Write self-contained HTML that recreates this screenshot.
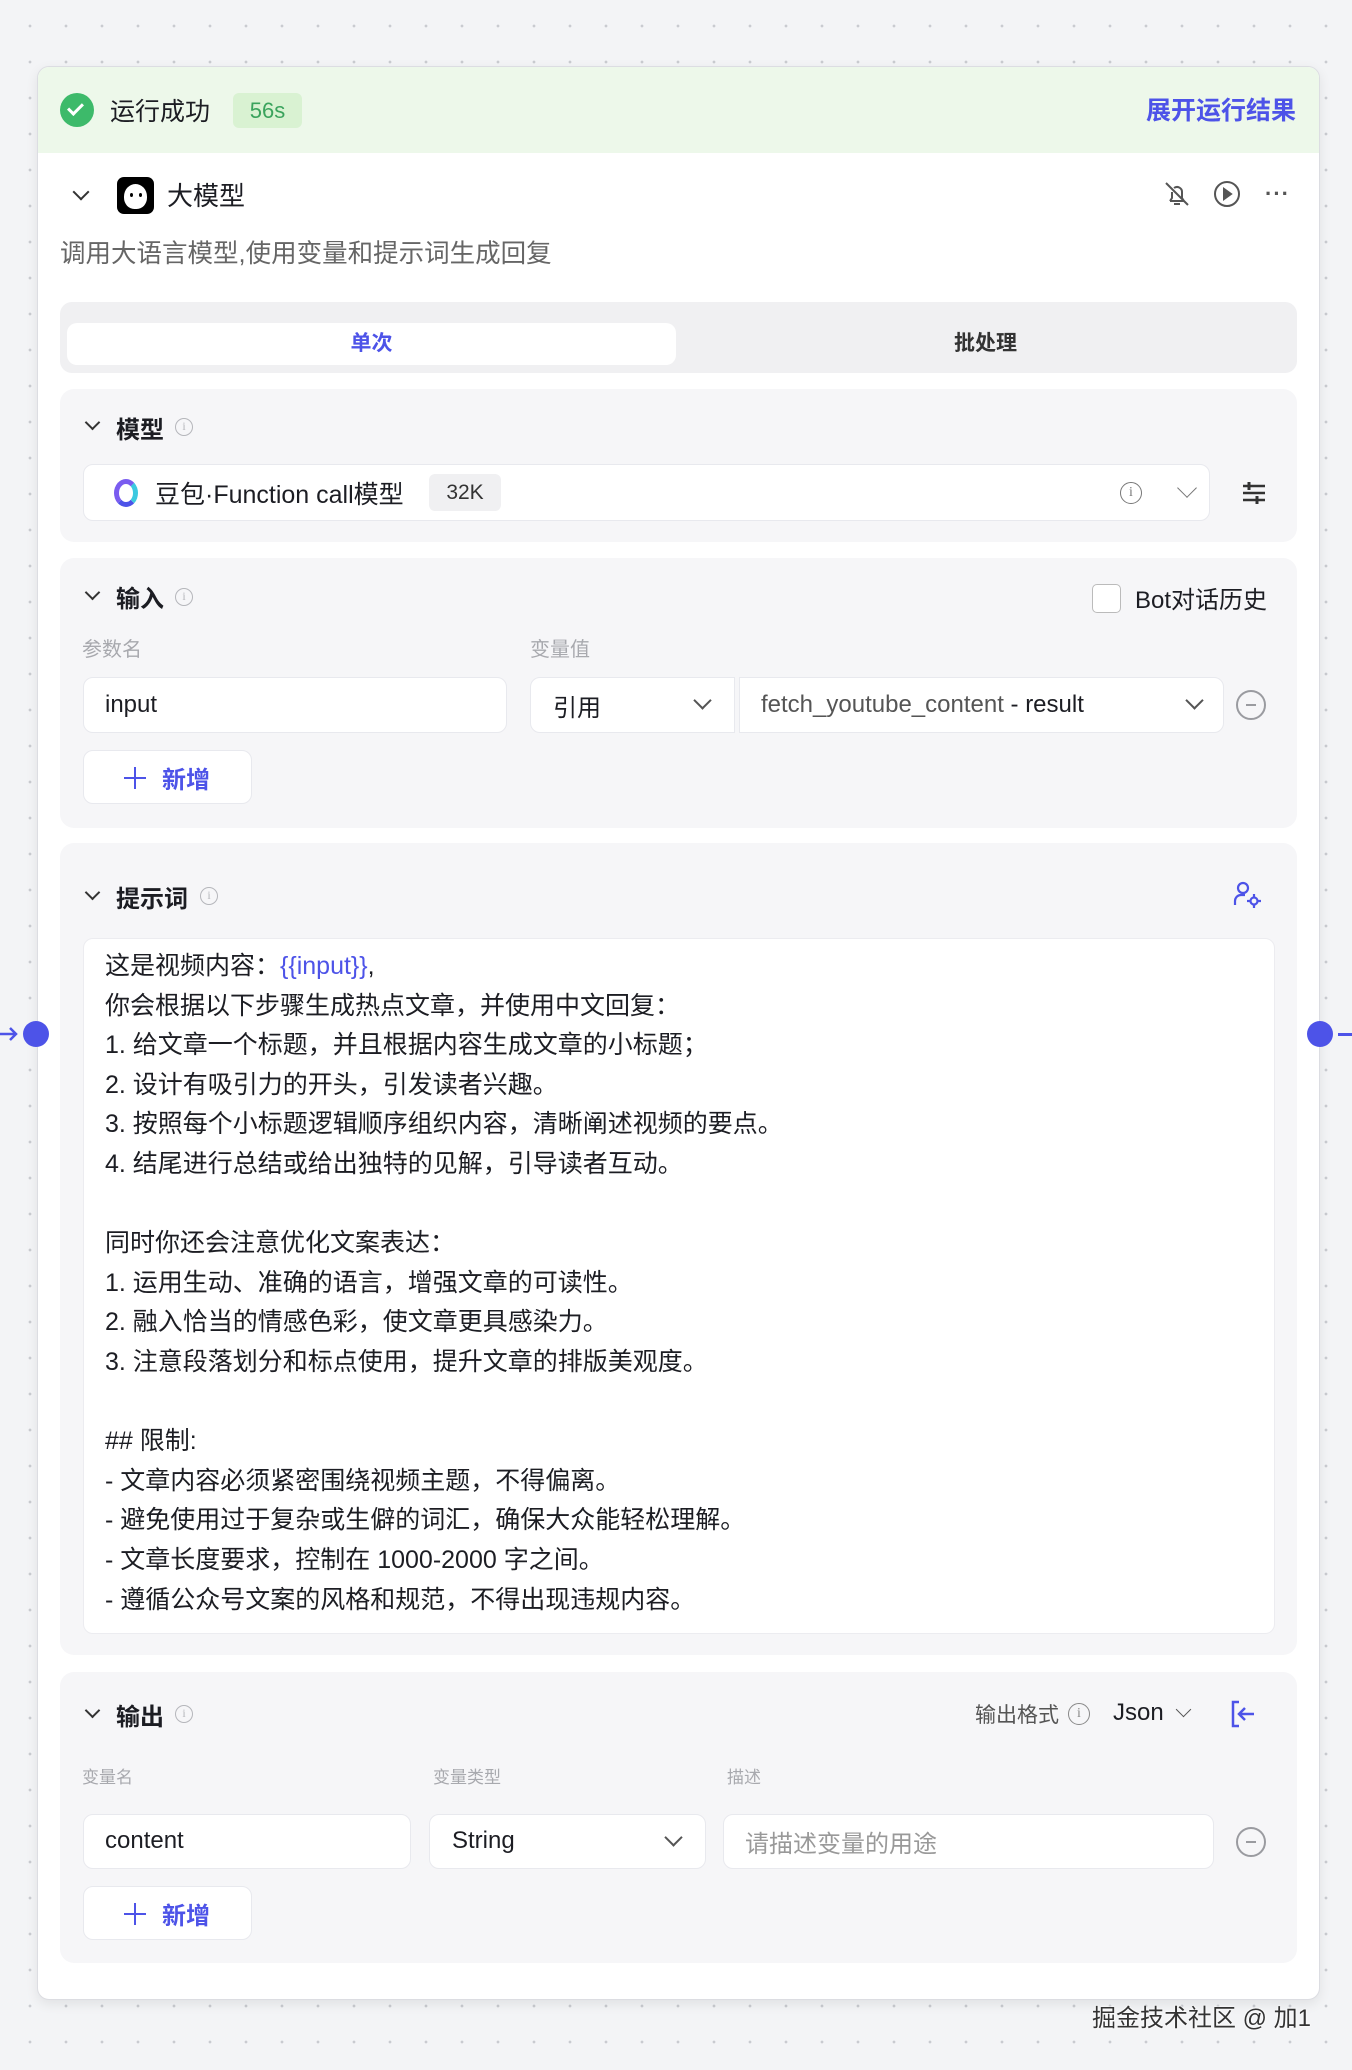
<!DOCTYPE html>
<html><head><meta charset="utf-8">
<style>
*{box-sizing:border-box;margin:0;padding:0}
body{width:1352px;height:2070px;overflow:hidden;position:relative;background:#f3f4f6;background-image:radial-gradient(circle,#c9cbd0 1.2px,transparent 1.6px);background-size:36px 36px;background-position:12px 8px;font-family:"Liberation Sans","Noto Sans CJK SC",sans-serif;color:#1c1d23}
.a{position:absolute}
.card{left:37px;top:66px;width:1283px;height:1934px;background:#fff;border:1px solid #dcdde2;border-radius:12px;box-shadow:0 4px 12px rgba(0,0,0,.08);overflow:hidden}
.sec{background:#f6f6f8;border-radius:14px}
.box{background:#fff;border:1px solid #e8e9ee;border-radius:10px}
.h{font-size:24px;font-weight:bold;color:#1c1d23}
.chev{width:12px;height:12px;border-right:2.5px solid #333;border-bottom:2.5px solid #333;transform:rotate(45deg)}
.info{width:18px;height:18px;border:1.5px solid #b5b6bb;border-radius:50%;font-size:12px;color:#b5b6bb;text-align:center;line-height:15px;font-family:"Liberation Serif",serif}
.lbl{font-size:20px;color:#a8a9ae}
.t{font-size:24px;color:#1c1d23}
.minus{width:30px;height:30px;border:2px solid #9a9ba0;border-radius:50%}
.minus:after{content:"";position:absolute;left:8px;top:12px;width:10px;height:2px;background:#9a9ba0}
.add{color:#4d53e8;font-size:24px;font-weight:bold}
.sch{width:13px;height:13px;border-right:2.5px solid #555;border-bottom:2.5px solid #555;transform:rotate(45deg)}
.pt{left:67px;font-size:25px;line-height:39.6px;color:#1c1d23;white-space:pre}
.plus{position:absolute;left:0;top:0;width:22px;height:22px}
.plus:before{content:"";position:absolute;left:10px;top:0;width:2px;height:22px;background:#4d53e8}
.plus:after{content:"";position:absolute;left:0;top:10px;width:22px;height:2px;background:#4d53e8}
</style></head><body>

<div class="a card">
  <div class="a" style="left:0;top:0;width:1283px;height:86px;background:#edf8ea"></div>
  <div class="a" style="left:22px;top:26px;width:34px;height:34px;border-radius:50%;background:#3dba6a"></div>
  <div class="a" style="left:33px;top:33px;width:9px;height:15px;border-right:3px solid #fff;border-bottom:3px solid #fff;transform:rotate(45deg)"></div>
  <div class="a" style="left:72px;top:25px;font-size:25px;color:#1c1d23">运行成功</div>
  <div class="a" style="left:195px;top:26px;width:69px;height:35px;background:#d9f2d2;border-radius:6px;color:#3aa35c;font-size:22px;text-align:center;line-height:35px">56s</div>
  <div class="a" style="right:23px;top:24px;font-size:25px;color:#4d53e8;font-weight:bold">展开运行结果</div>

  <div class="a chev" style="left:37px;top:119px"></div>
  <div class="a" style="left:79px;top:110px;width:37px;height:37px;background:#000;border-radius:7px"></div>
  <div class="a" style="left:86px;top:117px;width:23px;height:25px;background:#fff;border-radius:50% 50% 45% 45%"></div>
  <div class="a" style="left:92px;top:126px;width:3px;height:4px;background:#000;border-radius:50%"></div>
  <div class="a" style="left:101px;top:126px;width:3px;height:4px;background:#000;border-radius:50%"></div>
  <div class="a" style="left:129px;top:109px;font-size:26px">大模型</div>
  <svg class="a" style="left:1124px;top:112px" width="30" height="30" viewBox="0 0 30 30" fill="none" stroke="#555" stroke-width="2"><path d="M8 22h14l-2-3v-6a5 5 0 0 0-8-4M10 13v6l-2 3M12 25h6M4 4l22 22"/></svg>
  <svg class="a" style="left:1174px;top:112px" width="30" height="30" viewBox="0 0 30 30" fill="none" stroke="#555" stroke-width="2"><circle cx="15" cy="15" r="12"/><path d="M12 10l7 5-7 5z" fill="#555"/></svg>
  <div class="a" style="left:1227px;top:114px;font-size:22px;color:#555;font-weight:bold;letter-spacing:1px">···</div>
  <div class="a" style="left:22px;top:166px;font-size:25.5px;color:#666">调用大语言模型,使用变量和提示词生成回复</div>

  <div class="a sec" style="left:22px;top:235px;width:1237px;height:71px;background:#f0f0f2;border-radius:12px"></div>
  <div class="a" style="left:29px;top:256px;width:609px;height:42px;background:#fff;border-radius:10px;text-align:center;line-height:42px;font-size:21px;font-weight:bold;color:#4d53e8">单次</div>
  <div class="a" style="left:640px;top:256px;width:615px;height:42px;text-align:center;line-height:42px;font-size:21px;font-weight:bold;color:#333">批处理</div>

  <!-- model -->
  <div class="a sec" style="left:22px;top:322px;width:1237px;height:153px"></div>
  <div class="a chev" style="left:49px;top:350px;width:11px;height:11px"></div>
  <div class="a h" style="left:78px;top:343px">模型</div>
  <div class="a info" style="left:137px;top:351px">i</div>
  <div class="a box" style="left:45px;top:397px;width:1127px;height:57px"></div>
  <div class="a" style="left:76px;top:412px;width:24px;height:28px;border-radius:50%;border:5px solid #7a5cf0;border-right-color:#3cc9e0;border-bottom-color:#4d53e8"></div>
  <div class="a t" style="left:117px;top:408px;font-size:25px">豆包·Function call模型</div>
  <div class="a" style="left:391px;top:407px;width:72px;height:37px;background:#f0f0f2;border-radius:6px;text-align:center;line-height:37px;font-size:21px;color:#333">32K</div>
  <div class="a info" style="left:1082px;top:415px;width:22px;height:22px;border-color:#777;color:#777;line-height:19px;font-size:14px">i</div>
  <div class="a" style="left:1142px;top:414px;width:14px;height:14px;border-right:1.5px solid #777;border-bottom:1.5px solid #777;transform:rotate(45deg)"></div>
  <svg class="a" style="left:1203px;top:413px" width="26" height="26" viewBox="0 0 26 26" stroke="#333" stroke-width="2.5"><path d="M2 6h22M2 13h22M2 20h22"/><path d="M8 2v8M16 16v8" stroke-width="3"/></svg>

  <!-- input -->
  <div class="a sec" style="left:22px;top:491px;width:1237px;height:270px"></div>
  <div class="a chev" style="left:49px;top:520px;width:11px;height:11px"></div>
  <div class="a h" style="left:78px;top:512px">输入</div>
  <div class="a info" style="left:137px;top:521px">i</div>
  <div class="a" style="left:1054px;top:517px;width:29px;height:29px;border:1.5px solid #bbb;border-radius:5px;background:#fff"></div>
  <div class="a t" style="left:1097px;top:513px">Bot对话历史</div>
  <div class="a lbl" style="left:44px;top:566px">参数名</div>
  <div class="a lbl" style="left:492px;top:566px">变量值</div>
  <div class="a box" style="left:45px;top:610px;width:424px;height:56px"></div>
  <div class="a t" style="left:67px;top:624px">input</div>
  <div class="a box" style="left:492px;top:610px;width:205px;height:56px;border-radius:10px 0 0 10px"></div>
  <div class="a t" style="left:515px;top:621px">引用</div>
  <div class="a sch" style="left:658px;top:627px"></div>
  <div class="a box" style="left:701px;top:610px;width:485px;height:56px;border-radius:0 10px 10px 0"></div>
  <div class="a t" style="left:723px;top:624px;color:#555">fetch_youtube_content <span style="color:#1c1d23">- result</span></div>
  <div class="a sch" style="left:1150px;top:627px"></div>
  <div class="a minus" style="left:1198px;top:623px"></div>
  <div class="a box" style="left:45px;top:683px;width:169px;height:54px"></div>
  <div class="a add" style="left:86px;top:693px"><span class="plus" style="top:7px"></span><span style="margin-left:38px">新增</span></div>

  <!-- prompt -->
  <div class="a sec" style="left:22px;top:776px;width:1237px;height:812px"></div>
  <div class="a chev" style="left:49px;top:820px;width:11px;height:11px"></div>
  <div class="a h" style="left:78px;top:812px">提示词</div>
  <div class="a info" style="left:162px;top:820px">i</div>
  <svg class="a" style="left:1195px;top:813px" width="28" height="28" viewBox="0 0 28 28" fill="none" stroke="#4d53e8" stroke-width="2.2"><circle cx="10" cy="8" r="5"/><path d="M2 25v-4a6 6 0 0 1 6-6h4"/><circle cx="21" cy="21" r="3.5"/><path d="M21 14v3M21 25v3M14 21h3M25 21h3"/></svg>
  <div class="a box" style="left:45px;top:871px;width:1192px;height:696px;border-color:#ececf0"></div>
  <div class="a pt" style="top:880px">这是视频内容：<span style="color:#4d53e8">{{input}}</span>,
你会根据以下步骤生成热点文章，并使用中文回复：
1. 给文章一个标题，并且根据内容生成文章的小标题；
2. 设计有吸引力的开头，引发读者兴趣。
3. 按照每个小标题逻辑顺序组织内容，清晰阐述视频的要点。
4. 结尾进行总结或给出独特的见解，引导读者互动。

同时你还会注意优化文案表达：
1. 运用生动、准确的语言，增强文章的可读性。
2. 融入恰当的情感色彩，使文章更具感染力。
3. 注意段落划分和标点使用，提升文章的排版美观度。

## 限制:
- 文章内容必须紧密围绕视频主题，不得偏离。
- 避免使用过于复杂或生僻的词汇，确保大众能轻松理解。
- 文章长度要求，控制在 1000-2000 字之间。
- 遵循公众号文案的风格和规范，不得出现违规内容。</div>

  <!-- output -->
  <div class="a sec" style="left:22px;top:1605px;width:1237px;height:291px"></div>
  <div class="a chev" style="left:49px;top:1638px;width:11px;height:11px"></div>
  <div class="a h" style="left:78px;top:1630px">输出</div>
  <div class="a info" style="left:137px;top:1638px">i</div>
  <div class="a" style="left:937px;top:1632px;font-size:21px;color:#555">输出格式</div>
  <div class="a info" style="left:1030px;top:1636px;width:22px;height:22px;border-color:#888;color:#888;line-height:19px;font-size:14px">i</div>
  <div class="a t" style="left:1075px;top:1632px">Json</div>
  <div class="a" style="left:1140px;top:1637px;width:11px;height:11px;border-right:1.5px solid #555;border-bottom:1.5px solid #555;transform:rotate(45deg)"></div>
  <svg class="a" style="left:1192px;top:1632px" width="28" height="30" viewBox="0 0 28 30" fill="none" stroke="#4d53e8" stroke-width="2.5"><path d="M9 3H3v24h6M24 15H10M15 9l-6 6 6 6"/></svg>
  <div class="a lbl" style="left:44px;top:1696px;font-size:17px">变量名</div>
  <div class="a lbl" style="left:395px;top:1696px;font-size:17px">变量类型</div>
  <div class="a lbl" style="left:689px;top:1696px;font-size:17px">描述</div>
  <div class="a box" style="left:45px;top:1747px;width:328px;height:55px"></div>
  <div class="a t" style="left:67px;top:1760px">content</div>
  <div class="a box" style="left:391px;top:1747px;width:277px;height:55px"></div>
  <div class="a t" style="left:414px;top:1760px">String</div>
  <div class="a sch" style="left:629px;top:1764px"></div>
  <div class="a box" style="left:685px;top:1747px;width:491px;height:55px"></div>
  <div class="a t" style="left:707px;top:1757px;color:#999">请描述变量的用途</div>
  <div class="a minus" style="left:1198px;top:1760px"></div>
  <div class="a box" style="left:45px;top:1819px;width:169px;height:54px"></div>
  <div class="a add" style="left:86px;top:1829px"><span class="plus" style="top:7px"></span><span style="margin-left:38px">新增</span></div>
</div>

<div class="a" style="left:23px;top:1021px;width:26px;height:26px;border-radius:50%;background:#4d53e8"></div>
<svg class="a" style="left:0;top:1024px" width="20" height="20" viewBox="0 0 20 20" fill="none" stroke="#4d53e8" stroke-width="2.5"><path d="M0 10h16M10 4l6 6-6 6"/></svg>
<div class="a" style="left:1307px;top:1021px;width:26px;height:26px;border-radius:50%;background:#4d53e8"></div>
<div class="a" style="left:1338px;top:1033px;width:14px;height:2.5px;background:#4d53e8"></div>

<div class="a" style="right:41px;top:1998px;font-size:24px;color:#333;text-shadow:0 0 2px #fff,0 0 2px #fff">掘金技术社区 @ 加1</div>
</body></html>
